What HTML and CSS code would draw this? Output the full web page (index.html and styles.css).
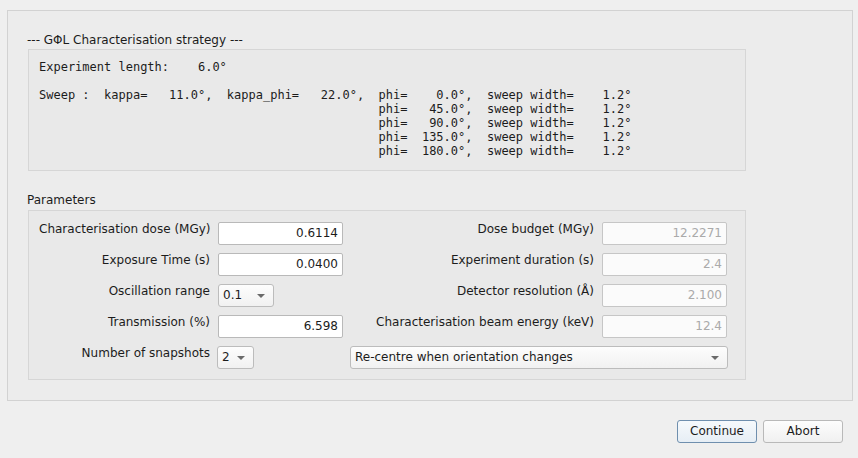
FILE: index.html
```html
<!DOCTYPE html>
<html>
<head>
<meta charset="utf-8">
<link rel="stylesheet" href="styles.css">
</head>
<body>
<div class="frame">
  <div class="section-title first">--- GΦL Characterisation strategy ---</div>
  <div class="strategy"><pre class="mono">Experiment length:    6.0°

Sweep :  kappa=   11.0°,  kappa_phi=   22.0°,  phi=    0.0°,  sweep width=    1.2°
                                               phi=   45.0°,  sweep width=    1.2°
                                               phi=   90.0°,  sweep width=    1.2°
                                               phi=  135.0°,  sweep width=    1.2°
                                               phi=  180.0°,  sweep width=    1.2°</pre></div>
  <div class="section-title second">Parameters</div>
  <div class="params">
    <div class="label">Characterisation dose (MGy)</div>
    <div class="field left">0.6114</div>
    <div class="label">Dose budget (MGy)</div>
    <div class="field disabled">12.2271</div>

    <div class="label">Exposure Time (s)</div>
    <div class="field left">0.0400</div>
    <div class="label">Experiment duration (s)</div>
    <div class="field disabled">2.4</div>

    <div class="label">Oscillation range</div>
    <div class="combo osc"><span>0.1</span><i class="arrow"></i></div>
    <div class="label">Detector resolution (Å)</div>
    <div class="field disabled">2.100</div>

    <div class="label">Transmission (%)</div>
    <div class="field left">6.598</div>
    <div class="label">Characterisation beam energy (keV)</div>
    <div class="field disabled">12.4</div>

    <div class="label">Number of snapshots</div>
    <div class="combo snap"><span>2</span><i class="arrow"></i></div>
    <div class="combo wide"><span>Re-centre when orientation changes</span><i class="arrow"></i></div>
  </div>
</div>
<div class="buttons">
  <div class="btn default">Continue</div>
  <div class="btn">Abort</div>
</div>
</body>
</html>
```

FILE: styles.css
```css
html, body {
  margin: 0;
  padding: 0;
  background: #efefef;
  font-family: "DejaVu Sans", sans-serif;
  font-size: 12px;
  color: #1c1c1c;
}

.frame {
  margin: 10px 5px 0 7px;
  height: 391px;
  border: 1px solid #d2d2d2;
  background: #ececec;
  padding: 0 0 0 19px;
  box-sizing: border-box;
}

.section-title {
  line-height: 14px;
  height: 14px;
}

.section-title.first {
  margin-top: 22px;
}

.section-title.second {
  margin-top: 22px;
}

.strategy {
  margin-top: 2px;
  margin-left: 1px;
  width: 718px;
  height: 122px;
  box-sizing: border-box;
  border: 1px solid #d6d6d6;
  background: #e9e9e9;
  padding: 10px 10px 0 10px;
}

.mono {
  margin: 0;
  font-family: "DejaVu Sans Mono", monospace;
  font-size: 12px;
  line-height: 14px;
  color: #1c1c1c;
}

.params {
  margin-top: 3px;
  margin-left: 1px;
  width: 718px;
  height: 170px;
  box-sizing: border-box;
  border: 1px solid #d6d6d6;
  background: #e9e9e9;
  padding: 11px 0 0 10px;
  display: grid;
  grid-template-columns: 171px 124px 244px 125px;
  grid-auto-rows: 23px;
  column-gap: 8px;
  row-gap: 8px;
}

.label {
  text-align: right;
  line-height: 14px;
  white-space: nowrap;
}

.field {
  height: 23px;
  box-sizing: border-box;
  border: 1px solid #b9b9b9;
  border-radius: 2px;
  background: #ffffff;
  text-align: right;
  padding: 0 4px;
  line-height: 21px;
  color: #1c1c1c;
}

.field.left {
  width: 125px;
}

.field.disabled {
  background: #fbfbfb;
  border-color: #c6c6c6;
  color: #aaaaaa;
}

.combo {
  height: 23px;
  box-sizing: border-box;
  border: 1px solid #bcbcbc;
  border-radius: 3px;
  background: linear-gradient(#fdfdfd, #f1f1f1);
  display: flex;
  align-items: center;
  justify-content: space-between;
  padding: 0 8px 0 4px;
  line-height: 21px;
}

.combo.osc {
  width: 56px;
}

.combo.snap {
  width: 37px;
  margin-left: -1px;
}

.combo.wide {
  grid-column: 3 / 5;
  margin-right: -1px;
}

.arrow {
  display: block;
  width: 0;
  height: 0;
  border-left: 4px solid transparent;
  border-right: 4px solid transparent;
  border-top: 4px solid #6a6a6a;
  margin-top: 1px;
}

.buttons {
  display: flex;
  justify-content: flex-end;
  gap: 6px;
  margin-top: 19px;
  padding-right: 15px;
}

.btn {
  width: 80px;
  height: 23px;
  box-sizing: border-box;
  border: 1px solid #b9b9b9;
  border-radius: 3px;
  background: linear-gradient(#fdfdfd, #f0f0f0);
  text-align: center;
  line-height: 21px;
  color: #1c1c1c;
}

.btn.default {
  border-color: #6f8fae;
  background: linear-gradient(#f6f9fc, #e6eef5);
}
```
